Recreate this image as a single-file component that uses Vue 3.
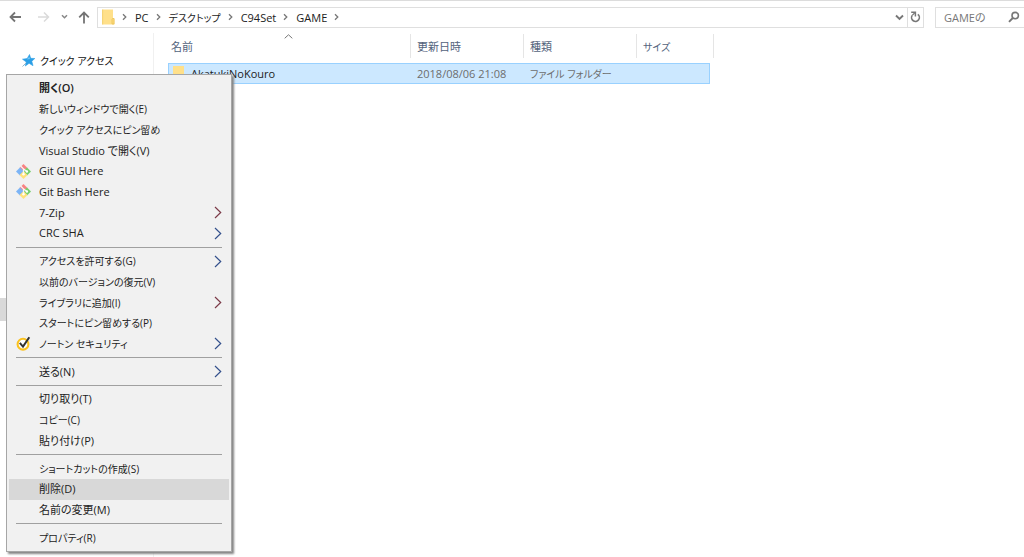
<script setup>
const crumbs = [
  { label: 'PC' },
  { label: 'デスクトップ', kana: true },
  { label: 'C94Set' },
  { label: 'GAME' },
]

const groups = [
  [
    { label: '開く(O)', bold: true },
    { label: '新しいウィンドウで開く(E)', kana: true },
    { label: 'クイック アクセスにピン留め', kana: true },
    { label: 'Visual Studio で開く(V)' },
    { label: 'Git GUI Here', icon: 'git' },
    { label: 'Git Bash Here', icon: 'git' },
    { label: '7-Zip', sub: 'red' },
    { label: 'CRC SHA', sub: 'blue' },
  ],
  [
    { label: 'アクセスを許可する(G)', sub: 'blue', kana: true },
    { label: '以前のバージョンの復元(V)', kana: true },
    { label: 'ライブラリに追加(I)', sub: 'red', kana: true },
    { label: 'スタートにピン留めする(P)', kana: true },
    { label: 'ノートン セキュリティ', icon: 'norton', sub: 'blue', kana: true },
  ],
  [{ label: '送る(N)', sub: 'blue' }],
  [{ label: '切り取り(T)' }, { label: 'コピー(C)', kana: true }, { label: '貼り付け(P)' }],
  [
    { label: 'ショートカットの作成(S)', kana: true },
    { label: '削除(D)', active: true },
    { label: '名前の変更(M)' },
  ],
  [{ label: 'プロパティ(R)', kana: true }],
]
</script>

<template>
  <div class="explorer">
    <header class="toolbar">
      <nav class="history">
        <button class="tool" aria-label="戻る">
          <svg width="13" height="12" viewBox="0 0 13 12"><path d="M12 6H1.5M6 1.5L1.5 6L6 10.5" fill="none" stroke="#747474" stroke-width="1.8" /></svg>
        </button>
        <button class="tool" aria-label="進む">
          <svg width="13" height="12" viewBox="0 0 13 12"><path d="M1 6h10.5M7 1.5L11.5 6L7 10.5" fill="none" stroke="#dadada" stroke-width="1.5" /></svg>
        </button>
        <button class="tool small" aria-label="履歴">
          <svg width="7" height="6" viewBox="0 0 7 6"><path d="M1 1.2L3.5 3.7L6 1.2" fill="none" stroke="#888" stroke-width="1.5" /></svg>
        </button>
        <button class="tool" aria-label="上へ">
          <svg width="12" height="13" viewBox="0 0 12 13"><path d="M6 12.5V1.5M1.2 6.3L6 1.5L10.8 6.3" fill="none" stroke="#747474" stroke-width="1.8" /></svg>
        </button>
      </nav>
      <div class="address">
        <svg class="folder" width="13" height="16" viewBox="0 0 13 16"><path d="M.5 .5h10.5v9H12.5v6H.5z" fill="#ffe08a" /><path d="M10.5 9.5h1.5V15h-2V10z" fill="#ffdc7a" stroke="#e8c25a" stroke-width=".8" /><path d="M0 .5h1.2v15H0z" fill="#f5d477" /></svg>
        <template v-for="crumb in crumbs" :key="crumb.label">
          <svg class="sep" width="5" height="8" viewBox="0 0 5 8"><path d="M1 1.2L3.8 4L1 6.8" fill="none" stroke="#777" stroke-width="1.3" /></svg>
          <a href="#" class="crumb" :class="{ kana: crumb.kana }">{{ crumb.label }}</a>
        </template>
        <svg class="sep" width="5" height="8" viewBox="0 0 5 8"><path d="M1 1.2L3.8 4L1 6.8" fill="none" stroke="#777" stroke-width="1.3" /></svg>
        <button class="drop" aria-label="以前の場所">
          <svg width="9" height="7" viewBox="0 0 9 7"><path d="M1 1.5L4.5 5L8 1.5" fill="none" stroke="#777" stroke-width="1.9" /></svg>
        </button>
        <button class="refresh" aria-label="更新">
          <svg width="11" height="12" viewBox="0 0 11 12"><path d="M7.8 3.4A3.9 3.9 0 1 1 2.2 4.4" fill="none" stroke="#777" stroke-width="1.6" /><path d="M1.2 1.2H5.4V5.4" fill="none" stroke="#777" stroke-width="1.5" /><path d="M5 1.6L2.2 4.4" stroke="#777" stroke-width="1.3" /></svg>
        </button>
      </div>
      <div class="search">
        <input type="text" aria-label="検索" placeholder="GAMEの" />
        <svg width="12" height="12" viewBox="0 0 12 12"><circle cx="7.2" cy="4.6" r="3.2" fill="none" stroke="#777" stroke-width="1.6" /><path d="M4.8 7L1 10.8" stroke="#777" stroke-width="1.9" /></svg>
      </div>
    </header>

    <div class="body">
      <aside class="sidebar">
        <a href="#" class="quick kana">
          <svg width="13" height="13" viewBox="0 0 13 13"><path d="M7.5.5L8.7 4.3L12.8 4.5L9.8 7.2L11 11.7L7.1 9.3L3.3 12L4.3 8L.5 5.2L5.2 4.5z" fill="#2b9fe6" stroke="#2b9fe6" stroke-width=".6" /><path d="M.5 12.5L4 9" stroke="#8fb4cc" /><path d="M7.3 2.5L8 5L5 5.5z" fill="#74c8f5" /></svg>
          クイック アクセス
        </a>
        <div class="current"></div>
      </aside>

      <main class="files">
        <table>
          <colgroup><col class="c-name" /><col class="c-date" /><col class="c-type" /><col class="c-size" /></colgroup>
          <thead>
            <tr>
              <th class="first">
                名前
                <svg class="sort" width="9" height="5" viewBox="0 0 9 5"><path d="M.7 4.3L4.5 .8L8.3 4.3" fill="none" stroke="#777" /></svg>
              </th>
              <th>更新日時</th>
              <th>種類</th>
              <th class="kana">サイズ</th>
            </tr>
          </thead>
          <tbody>
            <tr>
              <td class="name">
                <div class="entry">
                  <svg width="12" height="15" viewBox="0 0 12 15"><path d="M0 0h11v15H0z" fill="#ffe08a" /><path d="M10 9h2v6h-2z" fill="#edc75c" /></svg>
                  AkatukiNoKouro
                </div>
              </td>
              <td>2018/08/06 21:08</td>
              <td class="kana">ファイル フォルダー</td>
              <td></td>
            </tr>
          </tbody>
        </table>
      </main>
    </div>

    <div class="menu" role="menu">
      <template v-for="(group, g) in groups" :key="g">
        <div v-if="g" class="rule" role="separator"></div>
        <button
          v-for="item in group"
          :key="item.label"
          class="item"
          :class="{ bold: item.bold, active: item.active, kana: item.kana }"
          role="menuitem"
        >
          <span class="icon">
            <svg v-if="item.icon === 'git'" width="15" height="15" viewBox="0 0 15 15">
              <path d="M7.5 0L11.5 4L7.5 8L3.5 4z" fill="#f88383" />
              <path d="M4 3.5L8 7.5L4 11.5L0 7.5z" fill="#7cb4f6" />
              <path d="M11 3.5L15 7.5L11 11.5L7 7.5z" fill="#74cf6c" />
              <path d="M7.5 7L11.5 11L7.5 15L3.5 11z" fill="#ffe27a" />
              <path d="M4.8 2.2L8 5.4M7.5 5v5.5M8 5.3L10.8 7.5" fill="none" stroke="#f5f5f5" stroke-width="1.3" />
              <circle cx="7.5" cy="10.3" r="1.2" fill="#fff" /><circle cx="10.9" cy="7.5" r="1.2" fill="#fff" />
            </svg>
            <svg v-else-if="item.icon === 'norton'" width="15" height="15" viewBox="0 0 15 15">
              <circle cx="7" cy="8.2" r="5.4" fill="#fff" stroke="#fbc21f" stroke-width="2.1" />
              <path d="M3.8 6.8L7 10.6L13.3 1.2" fill="none" stroke="#333" stroke-width="2" />
            </svg>
          </span>
          <span class="label">{{ item.label }}</span>
          <svg v-if="item.sub" class="arrow" :class="item.sub" width="8" height="13" viewBox="0 0 8 13"><path d="M1 1L6.7 6.5L1 12" /></svg>
        </button>
      </template>
    </div>
  </div>
</template>

<style>
body {
  margin: 0;
}
</style>

<style scoped>
.explorer {
  position: relative;
  display: flex;
  flex-direction: column;
  box-sizing: border-box;
  min-height: 100vh;
  overflow: hidden;
  border-top: 1px solid #dcdcdc;
  background: #fff;
  color: #222;
  font-family: "Open Sans", "Noto Sans CJK JP", sans-serif;
  font-size: 11px;
  font-feature-settings: "palt";
}

button {
  padding: 0;
  border: 0;
  background: none;
  color: inherit;
  font: inherit;
  font-feature-settings: inherit;
}

a {
  color: inherit;
  text-decoration: none;
}

svg {
  flex: none;
  display: block;
}

.kana {
  font-size: 10px;
}

.toolbar {
  display: flex;
  align-items: center;
  height: 32px;
}

.history {
  display: flex;
  align-items: center;
  gap: 15px;
  flex: none;
  width: 88px;
  padding-left: 9px;
}

.history .small {
  margin: 0 -5px 0 -4px;
}

.address {
  display: flex;
  align-items: center;
  flex: 1;
  height: 19px;
  border: 1px solid #dfdfdf;
}

.folder {
  margin: 0 7px 0 4px;
}

.crumb {
  margin: 0 7px 0 8px;
}

.drop {
  display: flex;
  margin-left: auto;
  margin-right: 3px;
}

.refresh {
  display: flex;
  align-items: center;
  justify-content: center;
  width: 16px;
  height: 100%;
  border-left: 1px solid #dfdfdf;
}

.search {
  display: flex;
  align-items: center;
  flex: none;
  width: 88px;
  height: 19px;
  margin-left: 11px;
  border: 1px solid #dfdfdf;
  border-right: 0;
}

.search input {
  flex: 1;
  min-width: 0;
  padding: 0 0 0 8px;
  border: 0;
  outline: 0;
  background: none;
  font: inherit;
  font-feature-settings: inherit;
}

.search input::placeholder {
  color: #777;
}

.search svg {
  margin-right: 4px;
}

.body {
  display: flex;
  flex: 1;
}

.sidebar {
  flex: none;
  width: 153px;
  border-right: 1px solid #f0f0f0;
}

.quick {
  display: flex;
  align-items: center;
  gap: 5px;
  height: 22px;
  padding: 16px 0 0 22px;
  color: #111;
}

.current {
  height: 23px;
  margin-top: 227px;
  background: #d9d9d9;
}

.files {
  flex: 1;
  padding-left: 14px;
}

table {
  width: 542px;
  border-spacing: 0;
  table-layout: fixed;
}

.c-name {
  width: 243px;
}

.c-date,
.c-type {
  width: 113px;
}

th {
  position: relative;
  height: 26px;
  padding: 0 0 0 6px;
  color: #53637c;
  font-weight: 400;
  text-align: left;
}

th::after {
  content: "";
  position: absolute;
  top: 1px;
  right: 0;
  bottom: 1px;
  border-right: 1px solid #e5e5e5;
}

th:last-child::after {
  right: -4px;
}

th.first {
  padding-left: 3px;
}

.sort {
  position: absolute;
  top: 1px;
  left: 116px;
}

thead::after {
  content: "";
  display: block;
  height: 4px;
}

td {
  height: 19px;
  padding: 0 0 0 6px;
  border: solid #99d1ff;
  border-width: 1px 0;
  background: #cce8ff;
  color: #6d6d6d;
}

td:first-child {
  border-left-width: 1px;
  padding-left: 4px;
}

td:last-child {
  border-right-width: 1px;
}

.name {
  color: #222;
}

.entry {
  display: flex;
  align-items: center;
  gap: 6px;
}

.menu {
  position: absolute;
  top: 73px;
  bottom: 5px;
  left: 6px;
  display: flex;
  flex-direction: column;
  box-sizing: border-box;
  width: 226px;
  padding: 3px 2px;
  border: 1px solid #a6a6a6;
  background: #f1f1f1;
  box-shadow: 2px 2px 2px #858585;
}

.item {
  display: flex;
  align-items: center;
  flex: 1 1 0;
  min-height: 16px;
  line-height: 16px;
  text-align: left;
  white-space: nowrap;
}

.item.bold {
  font-weight: 600;
}

.item.active {
  background: #d8d8d8;
}

.icon {
  flex: none;
  width: 23px;
  padding-left: 7px;
}

.label {
  flex: 1;
}

.arrow {
  margin-right: 7px;
  fill: none;
  stroke-width: 1.2;
}

.arrow.red {
  stroke: #7b3a48;
}

.arrow.blue {
  stroke: #33508c;
}

.rule {
  flex: none;
  height: 1px;
  margin: 3px 7px;
  background: #a0a0a0;
}
</style>
